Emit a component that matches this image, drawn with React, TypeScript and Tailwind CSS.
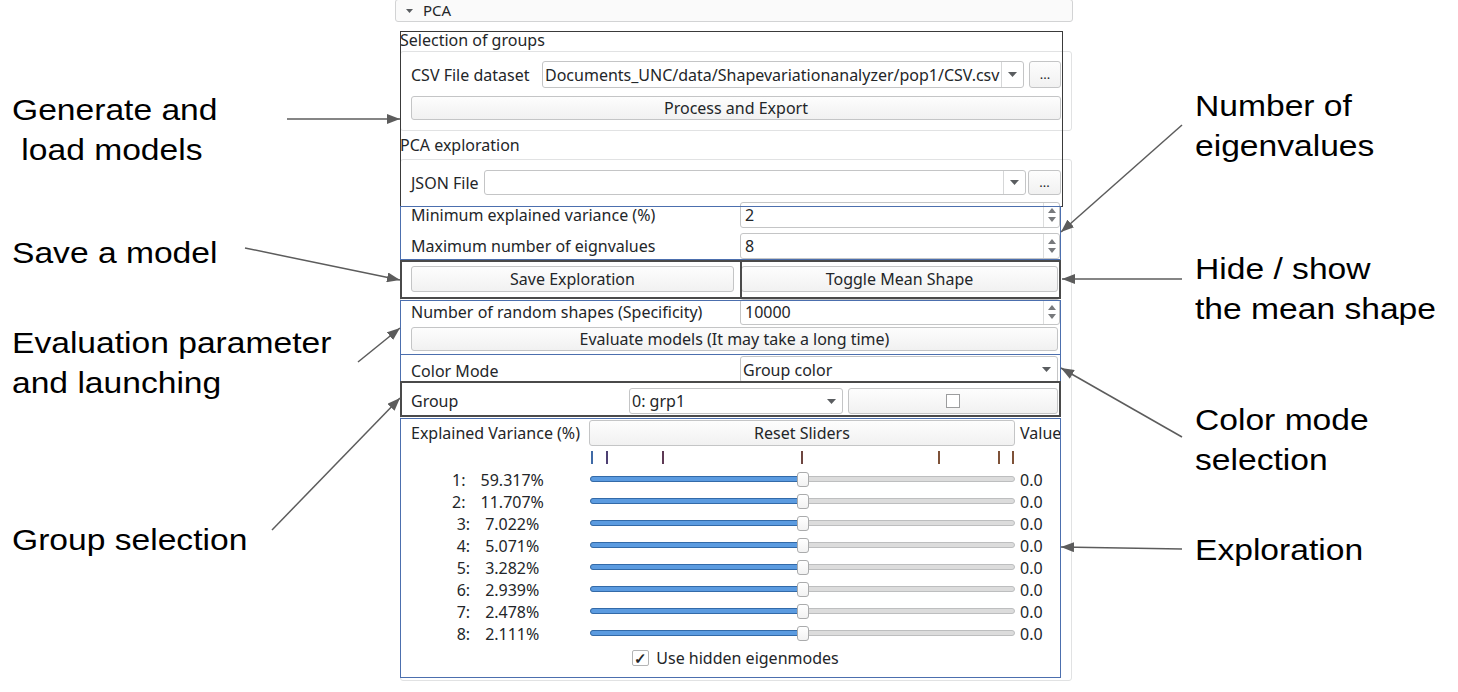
import clsx from "clsx";
import type { ReactNode } from "react";

const modes = [
  ["1:", "59.317%"],
  ["2:", "11.707%"],
  ["3:", "7.022%"],
  ["4:", "5.071%"],
  ["5:", "3.282%"],
  ["6:", "2.939%"],
  ["7:", "2.478%"],
  ["8:", "2.111%"],
];

// tick marks above the sliders, offset from the groove start
const ticks = [
  { x: 1, c: "#3f6aa6" },
  { x: 16, c: "#4d3f73" },
  { x: 72, c: "#5e3a55" },
  { x: 211, c: "#6e4640" },
  { x: 348, c: "#7e5238" },
  { x: 408, c: "#7e5238" },
  { x: 422, c: "#7e5238" },
];

function Btn({ children, className }: { children?: ReactNode; className?: string }) {
  return (
    <div
      className={clsx(
        "flex items-center justify-center rounded-[3px] border border-[#c4c5c6] bg-linear-to-b from-[#fdfdfd] to-[#f1f1f1] text-[#232629]",
        className
      )}
    >
      {children}
    </div>
  );
}

function Caret() {
  return (
    <svg width="9" height="5" viewBox="0 0 9 5">
      <path d="M0 0 L9 0 L4.5 5 Z" fill="#5a5d60" />
    </svg>
  );
}

function Combo({ text, split, className }: { text?: string; split?: boolean; className?: string }) {
  return (
    <div
      className={clsx(
        "flex items-stretch rounded-[3px] border border-[#c4c5c6] bg-white text-[#232629]",
        className
      )}
    >
      <div className="flex-1 flex items-center pl-[2px] overflow-hidden whitespace-nowrap">{text}</div>
      <div
        className={clsx(
          "w-[22px] flex items-center justify-center",
          split && "border-l border-[#d6d7d8]"
        )}
      >
        <Caret />
      </div>
    </div>
  );
}

function Spin({ value, className }: { value: string; className?: string }) {
  return (
    <div
      className={clsx(
        "flex items-stretch rounded-[3px] border border-[#c4c5c6] bg-white text-[#232629]",
        className
      )}
    >
      <div className="flex-1 flex items-center pl-[4px]">{value}</div>
      <div className="w-[16px] border-l border-[#dcdddd] flex items-center justify-center">
        <svg width="8" height="14" viewBox="0 0 8 14">
          <path d="M0 5 L8 5 L4 0 Z" fill="#77797c" />
          <path d="M0 9 L8 9 L4 14 Z" fill="#77797c" />
        </svg>
      </div>
    </div>
  );
}

function Slider() {
  return (
    <div className="relative h-[22px] flex items-center">
      <div className="relative w-full h-[6px] rounded-full border border-[#bdbebf] bg-[#dcdcdc]">
        <div className="absolute -left-px -top-px h-[6px] w-1/2 rounded-l-full border border-[#336aa8] bg-[#5b9be0]" />
      </div>
      <div className="absolute left-1/2 top-[4px] -translate-x-1/2 w-[12px] h-[15px] rounded-[3px] border border-[#aaabac] bg-linear-to-b from-white to-[#f2f2f2]" />
    </div>
  );
}

export default function App() {
  return (
    <div className="relative w-[1458px] h-[692px] bg-white overflow-hidden flex">
      {/* left callouts */}
      <div className="w-[395px] shrink-0 pl-[12px] font-['Liberation_Sans',Arial,sans-serif] text-[30px] leading-[40px] text-black">
        <div className="mt-[90px] origin-left scale-x-[1.12]">
          <div>Generate and</div>
          <div>&nbsp;load models</div>
        </div>
        <div className="mt-[63px] origin-left scale-x-[1.12]">Save a model</div>
        <div className="mt-[50px] origin-left scale-x-[1.12]">
          <div>Evaluation parameter</div>
          <div>and launching</div>
        </div>
        <div className="mt-[117px] origin-left scale-x-[1.12]">Group selection</div>
      </div>

      {/* the Qt panel */}
      <div className="w-[678px] shrink-0 pl-[5px] pr-px font-['Noto_Sans',sans-serif] text-[16px] text-[#232629]">
        <div className="-ml-[5px] -mr-px h-[23px] -mt-px border border-[#d2d3d4] rounded-[3px] bg-[#fafafa] flex items-center pl-[10px]">
          <svg width="7" height="4" viewBox="0 0 7 4">
            <path d="M0 0 L7 0 L3.5 4 Z" fill="#5a5d60" />
          </svg>
          <span className="ml-[10px] text-[15px]">PCA</span>
        </div>

        <div className="mt-[8px] h-[20px] flex items-center leading-none">Selection of groups</div>
        <div className="mt-px h-[80px] border border-[#e1e2e3] rounded-[3px] pl-[10px] pr-[10px] pt-[9px]">
          <div className="h-[27px] flex items-stretch">
            <div className="w-[131px] flex items-center">CSV File dataset</div>
            <Combo split className="flex-1" text="Documents_UNC/data/Shapevariationanalyzer/pop1/CSV.csv" />
            <Btn className="ml-[5px] w-[32px] text-[13px]">...</Btn>
          </div>
          <Btn className="mt-[8px] h-[24px]">Process and Export</Btn>
        </div>

        <div className="mt-[4px] h-[20px] flex items-center leading-none">PCA exploration</div>
        <div className="mt-[4px] h-[522px] border border-[#e1e2e3] rounded-[3px] pl-[10px] pr-[10px] pt-[10px]">
          <div className="h-[25px] flex items-stretch">
            <div className="w-[73px] flex items-center">JSON File</div>
            <Combo split className="flex-1" />
            <Btn className="ml-[2px] w-[33px] text-[13px]">...</Btn>
          </div>

          <div className="mt-[7px] h-[26px] grid grid-cols-[329px_1fr] mr-px">
            <div className="flex items-center">Minimum explained variance (%)</div>
            <Spin value="2" />
          </div>
          <div className="mt-[5px] h-[26px] grid grid-cols-[329px_1fr] mr-px">
            <div className="flex items-center">Maximum number of eignvalues</div>
            <Spin value="8" />
          </div>

          <div className="mt-[7px] h-[23px] grid grid-cols-[323px_1fr] gap-[7px] mr-[3px]">
            <Btn>Save Exploration</Btn>
            <Btn>Toggle Mean Shape</Btn>
          </div>

          <div className="mt-[10px] h-[22px] grid grid-cols-[329px_1fr] mr-px">
            <div className="flex items-center">Number of random shapes (Specificity)</div>
            <Spin value="10000" />
          </div>
          <Btn className="mt-[6px] h-[24px] mr-[3px]">Evaluate models (It may take a long time)</Btn>

          <div className="mt-[5px] h-[24px] grid grid-cols-[329px_1fr] mr-[3px]">
            <div className="flex items-center pt-[3px]">Color Mode</div>
            <Combo text="Group color" />
          </div>

          <div className="mt-[8px] h-[26px] grid grid-cols-[213px_214px_1fr] gap-x-[5px] mr-[3px]">
            <div className="flex items-center">Group</div>
            <Combo text="0: grp1" />
            <Btn>
              <div className="w-[14px] h-[14px] border border-[#9c9d9e] bg-white" />
            </Btn>
          </div>

          {/* exploration */}
          <div className="mt-[4px] h-[258px] pt-[2px] mr-px">
            <div className="h-[23px] grid grid-cols-[173px_426px_1fr] gap-x-[5px] whitespace-nowrap">
              <div className="flex items-center">Explained Variance (%)</div>
              <Btn>Reset Sliders</Btn>
              <div className="flex items-center">Value</div>
            </div>
            <div className="mt-[8px] h-[13px] grid grid-cols-[174px_425px_1fr] gap-x-[5px]">
              <div />
              <div className="relative">
                {ticks.map((t) => (
                  <div
                    key={t.x}
                    className="absolute top-0 w-[2px] h-[13px]"
                    style={{ left: t.x, backgroundColor: t.c }}
                  />
                ))}
              </div>
              <div />
            </div>
            <div className="mt-[4px]">
              {modes.map(([n, p]) => (
                <div key={n} className="h-[22px] grid grid-cols-[174px_425px_1fr] gap-x-[5px]">
                  <div className="flex items-center justify-center gap-[15px]">
                    <span>{n}</span>
                    <span>{p}</span>
                  </div>
                  <Slider />
                  <div className="flex items-center">0.0</div>
                </div>
              ))}
            </div>
            <div className="mt-[3px] h-[22px] flex items-center justify-center">
              <div className="w-[17px] h-[16px] border border-[#b3b4b5] rounded-[2px] bg-white flex items-center justify-center text-[15px] font-bold leading-none">
                ✓
              </div>
              <span className="ml-[7px]">Use hidden eigenmodes</span>
            </div>
          </div>
        </div>
      </div>

      {/* right callouts */}
      <div className="flex-1 pl-[122px] font-['Liberation_Sans',Arial,sans-serif] text-[30px] leading-[40px] text-black whitespace-nowrap">
        <div className="mt-[86px] origin-left scale-x-[1.12]">
          <div>Number of</div>
          <div>eigenvalues</div>
        </div>
        <div className="mt-[83px] origin-left scale-x-[1.12]">
          <div>Hide / show</div>
          <div>the mean shape</div>
        </div>
        <div className="mt-[71px] origin-left scale-x-[1.12]">
          <div>Color mode</div>
          <div>selection</div>
        </div>
        <div className="mt-[50px] origin-left scale-x-[1.12]">Exploration</div>
      </div>

      {/* annotation boxes drawn over the panel */}
      <div className="absolute left-[400px] top-[31px] w-[663px] h-[176px] border border-[#3a3a3a] pointer-events-none" />
      <div className="absolute left-[400px] top-[206px] w-[661px] h-[54px] border border-[#4c6fae] pointer-events-none" />
      <div className="absolute left-[400px] top-[260px] w-[342px] h-[39px] border-2 border-[#4a4a4a] pointer-events-none" />
      <div className="absolute left-[740px] top-[260px] w-[321px] h-[39px] border-2 border-[#4a4a4a] pointer-events-none" />
      <div className="absolute left-[400px] top-[300px] w-[661px] h-[55px] border border-[#4c6fae] pointer-events-none" />
      <div className="absolute left-[400px] top-[354px] w-[661px] h-[28px] border border-[#4c6fae] pointer-events-none" />
      <div className="absolute left-[400px] top-[381px] w-[661px] h-[36px] border-2 border-[#4a4a4a] pointer-events-none" />
      <div className="absolute left-[400px] top-[418px] w-[661px] h-[260px] border border-[#4c6fae] pointer-events-none" />

      {/* callout arrows */}
      <svg className="absolute inset-0 pointer-events-none" width="1458" height="692">
        <defs>
          <marker id="ah" markerWidth="13" markerHeight="10" refX="13" refY="5" orient="auto" markerUnits="userSpaceOnUse">
            <path d="M0 0 L13 5 L0 10 Z" fill="#5c5c5c" />
          </marker>
        </defs>
        <g stroke="#5c5c5c" strokeWidth="1.5" markerEnd="url(#ah)">
          <line x1="287" y1="119" x2="400" y2="119" />
          <line x1="245" y1="248" x2="400" y2="280" />
          <line x1="358" y1="362" x2="400" y2="328" />
          <line x1="272" y1="530" x2="400" y2="398" />
          <line x1="1182" y1="125" x2="1061" y2="232" />
          <line x1="1182" y1="279" x2="1062" y2="279" />
          <line x1="1182" y1="437" x2="1061" y2="368" />
          <line x1="1182" y1="549" x2="1061" y2="547" />
        </g>
      </svg>
    </div>
  );
}
